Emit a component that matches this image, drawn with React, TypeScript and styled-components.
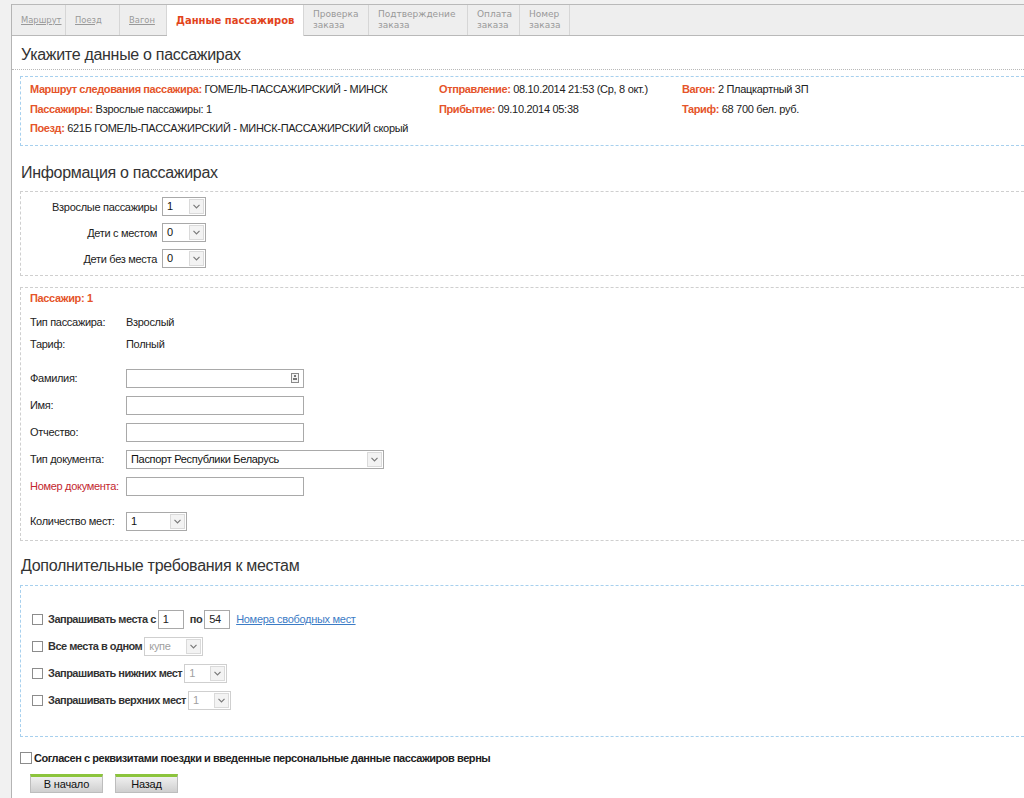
import React from 'react';
import styled, { createGlobalStyle } from 'styled-components';

const GlobalStyle = createGlobalStyle`
  html, body {
    margin: 0;
    padding: 0;
    background: #f1f1f1;
    overflow: hidden;
  }
  body {
    font-family: "Liberation Sans", Arial, sans-serif;
    font-size: 11px;
    letter-spacing: -0.3px;
    color: #222;
  }
`;

const tabs = [
  { title: ['Маршрут'], link: true, width: 54 },
  { title: ['Поезд'], link: true, width: 54 },
  { title: ['Вагон'], link: true, width: 47 },
  { title: ['Данные пассажиров'], active: true, width: 137 },
  { title: ['Проверка', 'заказа'], width: 65 },
  { title: ['Подтверждение', 'заказа'], width: 99 },
  { title: ['Оплата', 'заказа'], width: 52 },
  { title: ['Номер', 'заказа'], width: 50 },
];

function Chevron() {
  return (
    <svg width="7" height="5" viewBox="0 0 7 5">
      <path d="M0.5 0.8 L3.5 3.8 L6.5 0.8" fill="none" stroke="#7a7a7a" strokeWidth="1.2" />
    </svg>
  );
}

function Select({ value, width, disabled }: { value: string; width: number; disabled?: boolean }) {
  return (
    <SelectBox $w={width} $disabled={disabled}>
      <span>{value}</span>
      <ArrowBox>
        <Chevron />
      </ArrowBox>
    </SelectBox>
  );
}

function App() {
  return (
    <>
      <GlobalStyle />
      <Page>
        <TabBar>
          {tabs.map((t) => (
            <Tab key={t.title.join(' ')} $w={t.width} $active={t.active} $link={t.link}>
              {t.title.map((line) => (
                <span key={line}>{line}</span>
              ))}
            </Tab>
          ))}
        </TabBar>

        <Title>Укажите данные о пассажирах</Title>

        <InfoBox>
          <InfoGrid>
            <p>
              <b>Маршрут следования пассажира:</b> ГОМЕЛЬ-ПАССАЖИРСКИЙ - МИНСК
            </p>
            <p>
              <b>Отправление:</b> 08.10.2014 21:53 (Ср, 8 окт.)
            </p>
            <p>
              <b>Вагон:</b> 2 Плацкартный 3П
            </p>
            <p>
              <b>Пассажиры:</b> Взрослые пассажиры: 1
            </p>
            <p>
              <b>Прибытие:</b> 09.10.2014 05:38
            </p>
            <p>
              <b>Тариф:</b> 68 700 бел. руб.
            </p>
            <p className="wide">
              <b>Поезд:</b> 621Б ГОМЕЛЬ-ПАССАЖИРСКИЙ - МИНСК-ПАССАЖИРСКИЙ скорый
            </p>
          </InfoGrid>
        </InfoBox>

        <Heading $top={17} $bottom={8}>Информация о пассажирах</Heading>

        <GrayBox $pad="2px 0 3px">
          {[
            ['Взрослые пассажиры', '1'],
            ['Дети с местом', '0'],
            ['Дети без места', '0'],
          ].map(([label, value]) => (
            <CountRow key={label}>
              <label>{label}</label>
              <Select value={value} width={44} />
            </CountRow>
          ))}
        </GrayBox>

        <GrayBox $pad="1px 9px 5px" $top={11}>
          <PassengerTitle>Пассажир: 1</PassengerTitle>
          <InfoLine>
            <FieldLabel>Тип пассажира:</FieldLabel>
            <span>Взрослый</span>
          </InfoLine>
          <InfoLine>
            <FieldLabel>Тариф:</FieldLabel>
            <span>Полный</span>
          </InfoLine>

          <FieldList>
            <FieldRow>
              <FieldLabel>Фамилия:</FieldLabel>
              <TextInput $w={178}>
                <CardIcon width="8" height="10" viewBox="0 0 8 10">
                  <rect x="0.5" y="0.5" width="7" height="9" fill="#f4f4f4" stroke="#8a8a8a" />
                  <rect x="3" y="2" width="2" height="2" fill="#777" />
                  <rect x="2" y="5" width="4" height="2" fill="#777" />
                </CardIcon>
              </TextInput>
            </FieldRow>
            <FieldRow>
              <FieldLabel>Имя:</FieldLabel>
              <TextInput $w={178} />
            </FieldRow>
            <FieldRow>
              <FieldLabel>Отчество:</FieldLabel>
              <TextInput $w={178} />
            </FieldRow>
            <FieldRow>
              <FieldLabel>Тип документа:</FieldLabel>
              <Select value="Паспорт Республики Беларусь" width={258} />
            </FieldRow>
            <FieldRow>
              <FieldLabel $required>Номер документа:</FieldLabel>
              <TextInput $w={178} />
            </FieldRow>
          </FieldList>

          <FieldRow $top={8}>
            <FieldLabel>Количество мест:</FieldLabel>
            <Select value="1" width={61} />
          </FieldRow>
        </GrayBox>

        <Heading $top={15} $bottom={9}>Дополнительные требования к местам</Heading>

        <SeatBox>
          <SeatRow>
            <CheckBox />
            <SeatLabel>Запрашивать места с</SeatLabel>
            <SmallInput>1</SmallInput>
            <SeatLabel $gap={6}>по</SeatLabel>
            <SmallInput>54</SmallInput>
            <SeatLink>Номера свободных мест</SeatLink>
          </SeatRow>
          <SeatRow>
            <CheckBox />
            <SeatLabel>Все места в одном</SeatLabel>
            <Select value="купе" width={59} disabled />
          </SeatRow>
          <SeatRow>
            <CheckBox />
            <SeatLabel>Запрашивать нижних мест</SeatLabel>
            <Select value="1" width={43} disabled />
          </SeatRow>
          <SeatRow>
            <CheckBox />
            <SeatLabel>Запрашивать верхних мест</SeatLabel>
            <Select value="1" width={43} disabled />
          </SeatRow>
        </SeatBox>

        <Consent>
          <CheckBox $size={12} />
          <span>Согласен с реквизитами поездки и введенные персональные данные пассажиров верны</span>
        </Consent>

        <Buttons>
          <Button $w={73}>В начало</Button>
          <Button $w={63}>Назад</Button>
        </Buttons>
      </Page>
    </>
  );
}

export default App;

const Page = styled.div`
  margin: 4px 0 0 11px;
  min-height: 794px;
  background: #fff;
  border-left: 1px solid #b4b4b4;
`;

const TabBar = styled.div`
  display: flex;
  height: 30px;
  background: #eeeeee;
  border-top: 1px solid #b9b9b9;
  border-bottom: 1px solid #b9b9b9;
`;

const Tab = styled.div<{ $w: number; $active?: boolean; $link?: boolean }>`
  box-sizing: border-box;
  display: flex;
  flex-direction: column;
  justify-content: center;
  width: ${(p) => p.$w}px;
  padding-left: 9px;
  margin-bottom: ${(p) => (p.$active ? '-1px' : '0')};
  border-right: 1px solid #d6d6d6;
  background: ${(p) => (p.$active ? '#fff' : 'transparent')};
  font-family: "DejaVu Sans", Verdana, sans-serif;
  font-size: ${(p) => (p.$active ? '10px' : p.$link ? '8.4px' : '9px')};
  font-weight: ${(p) => (p.$active ? 700 : 400)};
  letter-spacing: 0;
  line-height: 11px;
  color: ${(p) => (p.$active ? '#e2441c' : '#999')};
  text-decoration: ${(p) => (p.$link ? 'underline' : 'none')};
  span {
    white-space: nowrap;
  }
`;

const Title = styled.h1`
  margin: 0;
  padding: 9px 9px 4px;
  font-size: 16px;
  font-weight: 400;
  letter-spacing: -0.3px;
  line-height: 20px;
  color: #333;
  border-bottom: 1px dotted #b8b8b8;
`;

const Heading = styled.h2<{ $top: number; $bottom: number }>`
  margin: 0;
  padding: ${(p) => p.$top}px 9px ${(p) => p.$bottom}px;
  font-size: 16px;
  font-weight: 400;
  letter-spacing: -0.3px;
  line-height: 20px;
  color: #333;
`;

const InfoBox = styled.div`
  margin: 6px 0 0 8px;
  padding: 3px 9px 6px;
  border: 1px dashed #a7d0ee;
  border-right: none;
`;

const InfoGrid = styled.div`
  display: grid;
  grid-template-columns: 409px 243px 1fr;
  p {
    margin: 0;
    line-height: 19.5px;
    white-space: nowrap;
  }
  .wide {
    grid-column: 1 / -1;
  }
  b {
    color: #e5542a;
    letter-spacing: -0.4px;
  }
`;

const GrayBox = styled.div<{ $pad: string; $top?: number }>`
  margin: ${(p) => p.$top ?? 0}px 0 0 8px;
  padding: ${(p) => p.$pad};
  border: 1px dashed #cfcfcf;
  border-right: none;
`;

const CountRow = styled.div`
  display: flex;
  align-items: center;
  height: 26px;
  gap: 5px;
  label {
    width: 136px;
    text-align: right;
  }
`;

const SelectBox = styled.div<{ $w: number; $disabled?: boolean }>`
  box-sizing: border-box;
  display: flex;
  align-items: stretch;
  width: ${(p) => p.$w}px;
  height: 19px;
  border: 1px solid ${(p) => (p.$disabled ? '#cfcfcf' : '#a9a9a9')};
  background: #fff;
  color: ${(p) => (p.$disabled ? '#a0a0a0' : '#111')};
  span {
    flex: 1;
    padding-left: 4px;
    line-height: 17px;
    white-space: nowrap;
  }
`;

const ArrowBox = styled.div`
  box-sizing: border-box;
  width: 15px;
  margin: 1px;
  display: flex;
  align-items: center;
  justify-content: center;
  background: #f3f3f3;
  border: 1px solid #dadada;
`;

const PassengerTitle = styled.div`
  height: 18px;
  margin-bottom: 4px;
  line-height: 18px;
  font-weight: 700;
  letter-spacing: -0.35px;
  color: #e5542a;
`;

const InfoLine = styled.div`
  display: flex;
  height: 22px;
  align-items: center;
`;

const FieldLabel = styled.span<{ $required?: boolean }>`
  width: 96px;
  flex-shrink: 0;
  white-space: nowrap;
  color: ${(p) => (p.$required ? '#c3272f' : '#222')};
`;

const FieldList = styled.div`
  margin-top: 10px;
`;

const FieldRow = styled.div<{ $top?: number }>`
  display: flex;
  align-items: center;
  height: 27px;
  margin-top: ${(p) => p.$top ?? 0}px;
`;

const TextInput = styled.div<{ $w: number }>`
  box-sizing: border-box;
  position: relative;
  width: ${(p) => p.$w}px;
  height: 19px;
  border: 1px solid #a9a9a9;
  background: #fff;
`;

const CardIcon = styled.svg`
  position: absolute;
  right: 4px;
  top: 3px;
`;

const SeatBox = styled.div`
  margin-left: 8px;
  padding: 20px 11px 22px;
  border: 1px dashed #a7d0ee;
  border-right: none;
`;

const SeatRow = styled.div`
  display: flex;
  align-items: center;
  height: 27px;
`;

const CheckBox = styled.span<{ $size?: number }>`
  box-sizing: border-box;
  display: inline-block;
  flex-shrink: 0;
  width: ${(p) => p.$size ?? 11}px;
  height: ${(p) => p.$size ?? 11}px;
  border: 1px solid #8c8c8c;
  background: #fff;
`;

const SeatLabel = styled.span<{ $gap?: number }>`
  margin: 0 2px 0 ${(p) => p.$gap ?? 5}px;
  font-weight: 700;
  letter-spacing: -0.5px;
  color: #333;
  white-space: nowrap;
`;

const SmallInput = styled.span`
  box-sizing: border-box;
  width: 26px;
  height: 19px;
  padding-left: 4px;
  line-height: 17px;
  border: 1px solid #a9a9a9;
`;

const SeatLink = styled.a`
  margin-left: 6px;
  color: #3c7cc6;
  text-decoration: underline;
  cursor: pointer;
`;

const Consent = styled.label`
  display: flex;
  align-items: center;
  gap: 2px;
  margin: 15px 0 0 8px;
  font-weight: 700;
  letter-spacing: -0.45px;
  color: #222;
`;

const Buttons = styled.div`
  display: flex;
  gap: 12px;
  padding: 10px 0 0 18px;
`;

const Button = styled.button<{ $w: number }>`
  box-sizing: border-box;
  width: ${(p) => p.$w}px;
  height: 19px;
  padding: 0;
  border: 1px solid #bdbdbd;
  border-top: 3px solid #8cc43c;
  background: linear-gradient(#efefef, #cfcfcf);
  font-family: "Liberation Sans", Arial, sans-serif;
  font-size: 11px;
  letter-spacing: -0.2px;
  line-height: 14px;
  color: #111;
`;
